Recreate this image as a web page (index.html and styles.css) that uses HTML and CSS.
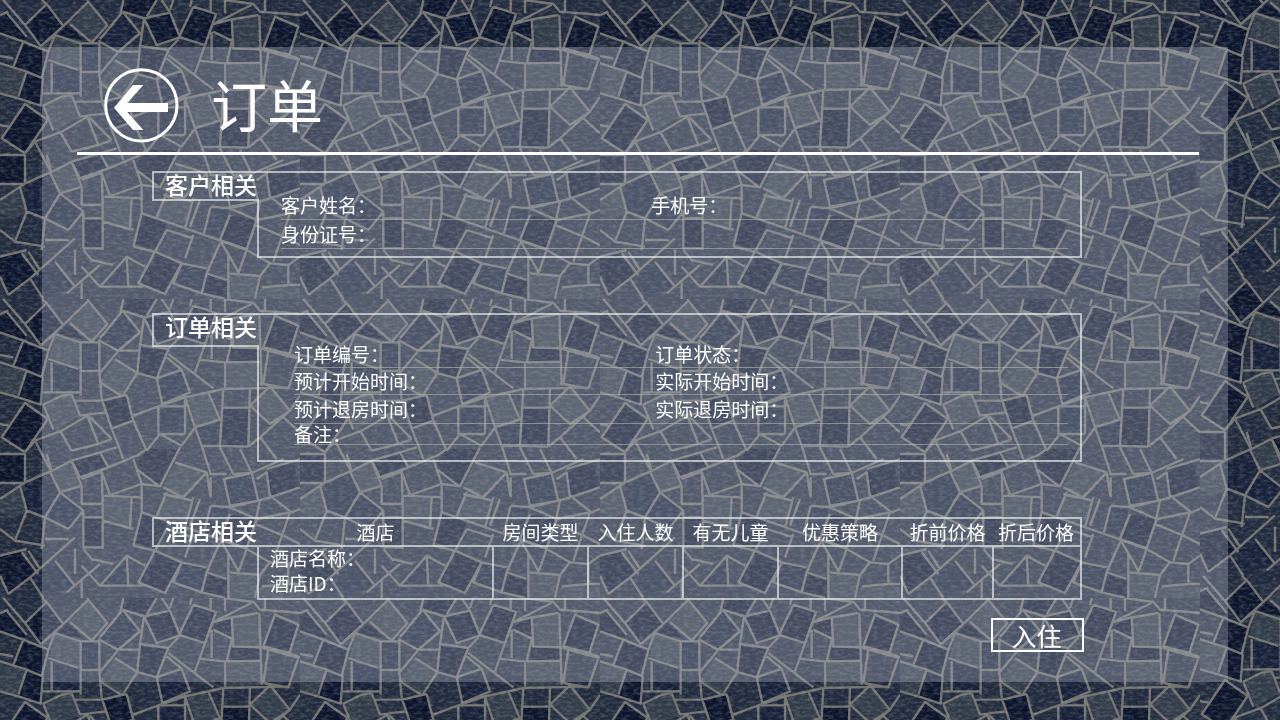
FILE: index.html
```html
<!DOCTYPE html>
<html lang="zh-CN">
<head>
<meta charset="utf-8">
<title>订单</title>
<link rel="stylesheet" href="styles.css">
</head>
<body>
<svg class="backdrop" aria-hidden="true">
  <defs>
    <filter id="grain" x="0" y="0" width="100%" height="100%">
      <feTurbulence type="fractalNoise" baseFrequency="0.06 0.12" numOctaves="4" seed="8"/>
      <feColorMatrix type="matrix" values="0 0 0 0 .5  0 0 0 0 .53  0 0 0 0 .54  1.6 0 0 0 -.65"/>
    </filter>
    <symbol id="stones" viewBox="0 0 900 897">
      <rect width="900" height="897" fill="#222b3e"/>
      <g fill="#0d152d">
        <path d="M75 75L140 12L190 78L122 138ZM20 38L0 46V98L72 122L80 110ZM368 0L470 0L440 50L368 35ZM432 55L510 38L540 112L470 135ZM580 20L648 42L615 135L540 105ZM825 50L895 80L868 165L790 145ZM70 125L145 155L128 235L45 205ZM80 215L128 235L122 318L55 290ZM420 138L505 150L470 238L412 222ZM75 312L143 360L75 460L5 415ZM305 300L380 288L400 365L335 388ZM670 326H745V440H660ZM695 150L785 150V188H690ZM640 72L695 60V120L640 95ZM210 72L250 122L170 105Z"/>
        <path transform="translate(0 450)" d="M0 15H75V100H0ZM215 35L300 10L325 55L240 85ZM425 0H535L475 110L410 60ZM800 60L880 35L900 115L810 145ZM425 190L500 215L475 300L400 280ZM690 195L770 210L740 297L660 270ZM250 205H308V290H250ZM0 320L65 310L110 375L25 435L0 380ZM465 305L545 340L495 432L415 400ZM620 370L680 390V440L605 430Z"/>
      </g>
      <g fill="#18213a">
        <path d="M245 130H298V216H242ZM155 195L240 210V278H155ZM368 35L420 100L355 155L300 118ZM475 238L545 212L570 280L487 315ZM585 385L660 362V440H605ZM475 322H555V405H475Z"/>
        <path transform="translate(0 450)" d="M85 385L165 335L220 410L130 440ZM380 320L385 410H300ZM672 90L755 72L775 155L690 170ZM632 170L690 175L660 265L612 250ZM135 205L180 130L250 185L200 240ZM75 100L150 68L180 130L135 205L80 185ZM545 340L620 355L605 430L520 400Z"/>
      </g>
      <g fill="#323b49">
        <path d="M265 5L322 75L275 128L210 72ZM695 58L775 45L785 148L700 145ZM165 105L242 130V210L150 180ZM555 295L625 280L660 362L585 385ZM345 180L412 222L368 290L300 250ZM675 190H785V260L675 270ZM130 318L215 285L240 350L160 392ZM750 320L810 262L870 335L810 375ZM0 200L75 215L55 290L0 280Z"/>
        <path transform="translate(0 450)" d="M150 68L215 35L245 110L180 130ZM0 150L60 110L80 185L40 210L0 190ZM308 140L390 145L395 235L308 215ZM500 130L580 155L550 225L470 200ZM525 40L620 70L550 145L490 115ZM690 370L780 378L765 447H685ZM785 412H900V447H765Z"/>
      </g>
      <g fill="none" stroke="#737471" stroke-width="7" stroke-linejoin="round">
        <path d="M75 75L140 12L190 78L122 138ZM10 0L75 75M125 0L140 12M190 78L265 5L322 75L275 128L210 72M0 100L70 125L145 155M0 168L40 175M70 125L40 200M0 190L80 215L128 235M80 215L55 290M0 280L55 295L125 318M128 235L122 318M20 38L80 110M0 46L25 35M145 155L125 235M122 138L165 105L242 130M145 155L165 105M145 180L235 210M155 190V278M242 130V290M128 280H240M245 130H298M298 120V220M242 216H298M298 125L355 155L295 228M298 220L305 300M345 180L412 222L368 290M300 250L365 292M355 155H415M368 35L420 100L355 155M368 35L300 118M368 35L432 55M370 0L362 40M432 55L420 140M432 55L470 135L540 112L510 38L432 55M470 0L440 50M485 0L510 38M520 0L510 30M265 5L262 0"/>
        <path d="M420 138L505 150L470 238L412 222ZM420 100L355 155M505 150L535 118M540 112L615 135M580 20L540 105M580 20L648 42L585 220M500 175L545 212L470 238M505 165L640 268M545 212L570 280L487 315L470 238M575 0L570 22M632 0V35M675 0V40M675 0L760 12M640 72L755 15M640 72L695 58L775 45M640 95L695 122M695 58L700 145L785 148M635 95V180M595 182L675 190L785 188M695 125L680 190M760 12L780 35L900 45M795 0V35M778 45L785 260M825 50L790 145L868 165L895 80ZM868 165L900 178M805 155L895 180L865 268L790 255ZM785 148L805 155M675 190V270M128 318L185 290L215 285M130 318L160 392M215 285L240 350M225 305H305L380 288M305 300L335 388L400 365L380 288M240 350L315 340M400 350L475 322L555 295L670 270L750 268L865 265"/>
        <path d="M75 312L5 415L75 460L143 360ZM0 375L25 380M105 425L185 395L262 350L295 435M180 395L215 455M268 352L335 420M335 388L370 480M295 435L335 420M400 365L440 455M475 322V405H555M475 322H555M555 295V405M555 295L585 385L660 362L625 280M670 270L660 440M665 326H745M750 268L745 440M585 385L605 440L745 443M750 320L810 262L870 335L810 375ZM870 335L780 415M845 350L900 400M870 335L900 290M480 405L545 440M480 405L440 455M545 440L585 385M75 460L105 425M105 425L155 520M215 455L295 435M780 415L830 480M780 415L745 443"/>
        <g transform="translate(0 450)">
          <path d="M75 15V100M0 15H75M0 102H75M75 100L150 68L215 35L300 10L350 -5M150 68L180 130L245 110L215 35M140 15L155 68M215 35L240 85L325 55L410 20L440 0M300 10L325 55M400 30L425 105L480 112L540 -5M410 60L475 110M245 90L305 68L308 165M305 68L330 138L425 105M245 110V165H308M308 140L425 145M395 145L390 235M308 140V300M308 215L400 240M425 105V190L400 290M425 190L500 215M525 40L620 70L550 145L490 115M620 70L632 145M605 -10L632 75H680M632 85V145M490 135L580 155M500 130L470 200M580 145L555 235M600 150L570 230M632 170L690 175L775 155M632 170L612 250M672 90L690 170L775 155L755 72ZM660 -5L700 75L755 72M720 0L755 72L850 30M770 90L800 70L810 145M800 60L900 30M775 155L810 145L900 115M690 175L770 210L870 190M690 195L660 270L740 297L770 210M780 155L765 225L850 260M870 190L820 335M810 140L875 190L900 180"/>
          <path d="M500 215L740 300L810 340L865 345M500 240L580 265M580 255L555 325M740 300L715 370M660 270L715 365M660 280L620 370M685 310V447M690 370L780 378L810 340M780 378L765 447M865 345V405L785 412M0 150L60 110L80 185L135 205L180 130L250 185V295M75 100L60 110M135 205L205 240L250 185M250 205H308M135 205L125 300M135 270H205M0 240L45 275L135 290M80 185L45 275M250 295H310M0 320L80 300M65 310L115 375M85 305L120 360M25 435L90 385L225 265M0 380L25 435M90 385L130 447M165 335L225 410M225 300V375M200 430L300 345M275 330L340 345M250 300L280 335M245 390V447M245 350L300 410H430M300 410L380 320L385 410M380 320L435 350M400 290L465 305L545 340L495 432L415 400L465 305L500 240M545 340L620 355M620 370L680 390M545 340L520 400L605 430L620 370M605 430L675 447M850 260L900 285M865 345L900 320M865 405H900"/>
        </g>
      </g>
      <rect width="900" height="897" filter="url(#grain)" opacity=".35"/>
    </symbol>
    <pattern id="paving" width="300" height="299" patternUnits="userSpaceOnUse">
      <use href="#stones" width="300" height="299"/>
    </pattern>
    <pattern id="paving-edge" x="1200" y="-22" width="300" height="299" patternUnits="userSpaceOnUse">
      <use href="#stones" width="300" height="299"/>
    </pattern>
  </defs>
  <rect width="100%" height="100%" fill="url(#paving)"/>
  <rect x="1200" width="100%" height="100%" fill="url(#paving-edge)"/>
</svg>

<main class="panel">
  <header class="header">
    <button class="back" type="button" aria-label="返回">
      <svg viewBox="312 204 225 225" aria-hidden="true">
        <circle cx="424" cy="316" r="107" fill="none" stroke="#fff" stroke-width="9"/>
        <path d="M342 323L399 255H430L382 309H504V336H382L430 390H399Z" fill="#fff"/>
      </svg>
    </button>
    <h1 class="title">订单</h1>
  </header>

  <div class="content">
    <section class="section">
      <div class="side">
        <h2 class="tab">客户相关</h2>
        <div class="side-line"></div>
      </div>
      <div class="box customer">
        <div class="row"><span>客户姓名：</span><span>手机号：</span></div>
        <div class="row"><span>身份证号：</span></div>
      </div>
    </section>

    <section class="section">
      <div class="side">
        <h2 class="tab tall">订单相关</h2>
        <div class="side-line"></div>
      </div>
      <div class="box order">
        <div class="row"><span>订单编号：</span><span>订单状态：</span></div>
        <div class="row"><span>预计开始时间：</span><span>实际开始时间：</span></div>
        <div class="row deep"><span>预计退房时间：</span><span>实际退房时间：</span></div>
        <div class="row short"><span>备注：</span></div>
      </div>
    </section>

    <section class="section">
      <div class="side">
        <h2 class="tab hotel-tab">酒店相关</h2>
        <div class="side-line"></div>
      </div>
      <table class="hotel">
        <colgroup>
          <col class="c-hotel"><col class="c-std"><col class="c-std"><col class="c-std"><col class="c-plan"><col class="c-before"><col>
        </colgroup>
        <thead>
          <tr><th>酒店</th><th>房间类型</th><th>入住人数</th><th>有无儿童</th><th>优惠策略</th><th>折前价格</th><th>折后价格</th></tr>
        </thead>
        <tbody>
          <tr><td><div class="name">酒店名称：</div><div class="code">酒店ID：</div></td><td></td><td></td><td></td><td></td><td></td><td></td></tr>
        </tbody>
      </table>
    </section>

    <div class="actions"><button class="checkin" type="button">入住</button></div>
  </div>
</main>
</body>
</html>
```
FILE: styles.css
```css
* { box-sizing: border-box; }

:root {
  --line: 2px solid rgba(240, 242, 245, .65);
}

body {
  margin: 0;
  background: #222b3e;
  color: #fff;
  font-family: "Noto Sans CJK SC", "Noto Sans", sans-serif;
  font-size: 19px;
  display: flow-root;
}

.backdrop {
  position: fixed;
  inset: 0;
  width: 100%;
  height: 100%;
  z-index: -1;
}

.panel {
  margin: 47px 52px 38px 42px;
  padding-bottom: 30px;
  background: rgba(176, 180, 194, .35);
}

.header {
  display: flex;
  align-items: center;
  gap: 32px;
  margin: 0 29px 0 35px;
  padding: 21px 0 9px 27px;
  border-bottom: 3px solid #fff;
}

.back {
  width: 75px;
  height: 75px;
  padding: 0;
  border: 0;
  background: none;
}

.back svg { display: block; }

.title {
  margin: 0;
  padding-bottom: 5px;
  font-size: 56px;
  line-height: 70px;
  font-weight: 400;
}

.content { margin: 16px 144px 0 110px; }

.section {
  display: flex;
  margin: 0 2px 55px 0;
  border-top: var(--line);
}

.side {
  display: flex;
  flex-direction: column;
  width: 107px;
}

.tab {
  margin: 0;
  padding: 0 0 4px 11px;
  border-left: var(--line);
  border-bottom: var(--line);
  font-size: 23px;
  line-height: 22px;
  font-weight: 500;
  white-space: nowrap;
}

.tall { padding-bottom: 8px; }

.hotel-tab {
  padding-bottom: 3px;
  line-height: 23px;
}

.side-line {
  flex: 1;
  border-right: var(--line);
}

.box {
  flex: 1;
  border-right: var(--line);
  border-bottom: var(--line);
}

.customer { padding: 18px 12px 7px 22px; }
.order { padding: 26px 12px 15px 35px; }

.row {
  display: grid;
  grid-template-columns: 8fr 9fr;
  line-height: 28px;
  border-bottom: 1px solid rgba(180, 182, 175, .6);
}

.order .row {
  grid-template-columns: 7fr 8fr;
  line-height: 26px;
}

.order .deep { line-height: 28px; }
.order .short { line-height: 20px; }

.hotel {
  flex: 1;
  table-layout: fixed;
  border-collapse: separate;
  border-spacing: 0;
  border-right: var(--line);
}

.c-hotel { width: 235px; }
.c-std { width: 95px; }
.c-plan { width: 124px; }
.c-before { width: 91px; }

.hotel th,
.hotel td {
  padding: 0;
  border-bottom: var(--line);
  font-weight: 400;
  white-space: nowrap;
}

.hotel th {
  padding-right: 2px;
  line-height: 26px;
}

.hotel td {
  height: 53px;
  padding-left: 11px;
  border-right: var(--line);
  vertical-align: top;
}

.hotel td:last-child { border-right: 0; }

.name { line-height: 22px; }
.code { line-height: 28px; }

.section:nth-of-type(3) { margin-bottom: 18px; }

.actions {
  display: flex;
  justify-content: flex-end;
}

.checkin {
  padding: 0 2px 0 0;
  width: 93px;
  border: 2px solid #fff;
  background: none;
  color: #fff;
  font: 400 25px/30px "Noto Sans CJK SC", sans-serif;
}
```
